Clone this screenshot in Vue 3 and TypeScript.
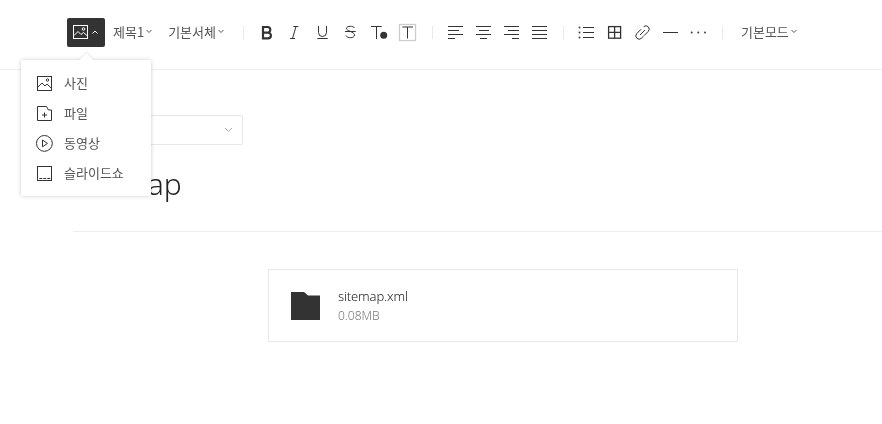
<template>
  <div class="editor">
    <header class="toolbar">
      <button class="media-btn">
        <svg width="16" height="16" viewBox="0 0 16 16" fill="none" stroke="#fff" stroke-width="1">
          <rect x="0.500" y="1.500" width="14" height="13" />
          <path d="M1 11.500l4-4 3 3 2.500-2 4 3.500" />
          <circle cx="10.500" cy="5" r="1.300" />
        </svg>
        <svg class="caret" width="7" height="5" viewBox="0 0 7 5" fill="none" stroke="#fff"><path d="M.5 3.500l2.500-2.500 2.500 2.500" /></svg>
      </button>
      <div class="select heading">제목1<svg class="chev" width="6" height="5" viewBox="0 0 6 5"><path d="M.5 1l2.500 2.500 2.500-2.500" /></svg></div>
      <div class="select font">기본서체<svg class="chev" width="6" height="5" viewBox="0 0 6 5"><path d="M.5 1l2.500 2.500 2.500-2.500" /></svg></div>
      <i class="sep first"></i>

      <div class="tools">
        <span class="tool"><svg width="28" height="28" viewBox="0 0 28 28" fill="none" stroke="#333" stroke-width="2.200"><path d="M10 8h4.500a2.800 2.800 0 0 1 0 5.600H10zM10 13.600h5a2.900 2.900 0 0 1 0 5.800H10zM10 7v13.500" /></svg></span>
        <span class="tool"><svg width="28" height="28" viewBox="0 0 28 28" fill="none" stroke="#333"><path d="M12.300 7.500h5M9 19.500h5M15 7.500l-3.500 12" /></svg></span>
        <span class="tool"><svg width="28" height="28" viewBox="0 0 28 28" fill="none" stroke="#333"><path d="M9.500 7v6.500a4 4 0 0 0 8 0V7M8.300 19.500h10.400" /></svg></span>
        <span class="tool"><svg width="28" height="28" viewBox="0 0 28 28" fill="none" stroke="#333"><path d="M17.500 9c-1-2.200-7.500-2.500-8 .3-.4 2.700 8 3.500 8 6.700 0 3.500-7.500 3.500-8.500.5M8 12.500h10.700" /></svg></span>
        <span class="tool"><svg width="28" height="28" viewBox="0 0 28 28" fill="none" stroke="#333"><path d="M6 7.500h10.700M11.500 7.500v12.500" /><circle cx="18.700" cy="16.300" r="3.500" fill="#333" stroke="none" /></svg></span>
        <span class="tool"><svg width="28" height="28" viewBox="0 0 28 28" fill="none" stroke="#333"><rect x="6.500" y="5.500" width="16" height="16" stroke="#ccc" stroke-width="1.300" /><path d="M9.300 8h10.700M14.500 8v11.500" /></svg></span>
      </div>
      <i class="sep second"></i>

      <div class="tools">
        <span class="tool"><svg width="28" height="28" viewBox="0 0 28 28" stroke="#333"><path d="M6 7.500h15M6 11.500h11M6 15.500h15M6 19.500h7" /></svg></span>
        <span class="tool"><svg width="28" height="28" viewBox="0 0 28 28" stroke="#333"><path d="M6 7.500h15M9 11.500h10M6 15.500h15M10 19.500h7" /></svg></span>
        <span class="tool"><svg width="28" height="28" viewBox="0 0 28 28" stroke="#333"><path d="M6 7.500h15M10 11.500h11M6 15.500h15M14 19.500h7" /></svg></span>
        <span class="tool"><svg width="28" height="28" viewBox="0 0 28 28" stroke="#333"><path d="M6 7.500h15M6 11.500h15M6 15.500h15M6 19.500h15" /></svg></span>
      </div>
      <i class="sep third"></i>

      <div class="tools">
        <span class="tool"><svg width="28" height="28" viewBox="0 0 28 28" stroke="#333" fill="none"><path d="M11 8.500h11M11 13.500h11M11 18.500h11" /><g fill="#444" stroke="none"><circle cx="7.500" cy="8.500" r="1" /><circle cx="7.500" cy="13.500" r="1" /><circle cx="7.500" cy="18.500" r="1" /></g></svg></span>
        <span class="tool"><svg width="28" height="28" viewBox="0 0 28 28" stroke="#333" fill="none" stroke-width="1.300"><rect x="8.600" y="7.600" width="12" height="11.600" /><path d="M14.600 7.600v11.600M8.600 13.400h12" /></svg></span>
        <span class="tool"><svg width="28" height="28" viewBox="0 0 28 28" stroke="#333" fill="none"><path d="M13 10.300L8.670 14.670a3.300 3.300 0 0 0 4.660 4.660L15.500 17.200" /><path d="M15.670 7.670a3.300 3.300 0 0 1 4.660 4.660L16 16.700" /><path d="M12 16l5-5" /></svg></span>
        <span class="tool"><svg width="28" height="28" viewBox="0 0 28 28" stroke="#333" fill="none"><path d="M7 13.500h15" /></svg></span>
        <span class="tool"><svg width="28" height="28" viewBox="0 0 28 28" fill="#444"><circle cx="7.700" cy="13.500" r="1" /><circle cx="14.300" cy="13.500" r="1" /><circle cx="21" cy="13.500" r="1" /></svg></span>
      </div>
      <i class="sep fourth"></i>
      <div class="select mode">기본모드<svg class="chev" width="6" height="5" viewBox="0 0 6 5"><path d="M.5 1l2.500 2.500 2.500-2.500" /></svg></div>
    </header>

    <main class="content">
      <div class="category">
        <svg width="9" height="6" viewBox="0 0 9 6" fill="none" stroke="#aaa"><path d="M1 1l3.500 3.500 3.500-3.500" /></svg>
      </div>
      <h1 class="title">sitemap</h1>
      <div class="file-wrap">
        <div class="file-card">
          <svg class="folder" width="29" height="28" viewBox="0 0 29 28"><path d="M0 0h13l4 3.500h12V28H0z" fill="#333" /></svg>
          <div>
            <div class="file-name">sitemap.xml</div>
            <div class="file-size">0.08MB</div>
          </div>
        </div>
      </div>
    </main>

    <div class="dropdown">
      <div class="row" v-for="item in menu" :key="item.label">
        <svg width="18" height="18" viewBox="0 0 18 18" fill="none" stroke="#333" v-html="item.icon"></svg>
        <span>{{ item.label }}</span>
      </div>
    </div>
  </div>
</template>

<script setup lang="ts">
interface MenuItem {
  label: string
  icon: string
}

const menu: MenuItem[] = [
  { label: '사진', icon: '<rect x="2.500" y="2.500" width="14" height="14"/><path d="M3 13l4-4 3 3 2-2 4 4"/><circle cx="12.500" cy="6" r="1.200"/>' },
  { label: '파일', icon: '<path d="M2.500 2.500h9l2 3.500h3v10.500h-14z"/><path d="M9.500 8.500v5M7 11h5"/>' },
  { label: '동영상', icon: '<circle cx="9.400" cy="9.400" r="7.900"/><path d="M7.500 6v6.800l5-3.400z"/>' },
  { label: '슬라이드쇼', icon: '<rect x="2.500" y="2.500" width="14" height="14"/><path d="M4.300 14.500h11" stroke-dasharray="3 1"/>' }
]
</script>

<style>
html,
body {
  margin: 0;
  background: #fff;
}
</style>

<style scoped>
.editor {
  position: relative;
  width: 882px;
  height: 424px;
  overflow: hidden;
  will-change: transform;
  font-family: "Noto Sans CJK KR", "Noto Sans", sans-serif;
  font-weight: 400;
  color: #333;
}

.toolbar {
  display: flex;
  align-items: center;
  height: 70px;
  padding: 0 0 5px 67px;
  box-sizing: border-box;
  border-bottom: 1px solid #eee;
}

.media-btn {
  display: flex;
  align-items: center;
  gap: 3px;
  width: 38px;
  height: 29px;
  padding: 0 0 0 6px;
  border: 0;
  border-radius: 2px;
  background: #333;
}

.select {
  display: flex;
  align-items: center;
  padding-bottom: 2px;
  font-size: 13px;
  color: #555;
  white-space: nowrap;
}

.chev {
  margin-left: 2px;
  fill: none;
  stroke: #555;
}

.heading { margin-left: 8px; }
.font { margin-left: 16px; }
.mode { margin-left: 18px; }

.sep {
  width: 1px;
  height: 13px;
  background: #e8e8e8;
}

.first { margin: 0 9px 0 19px; }
.second { margin: 0 9px 0 11px; }
.third { margin: 0 8px 0 9px; }
.fourth { margin-left: 10px; }

.tools {
  display: flex;
  margin-top: 2px;
}

.tool {
  display: block;
  width: 28px;
  height: 28px;
}

.content {
  padding: 45px 0 0 73px;
}

.category {
  display: flex;
  align-items: center;
  justify-content: flex-end;
  width: 170px;
  height: 30px;
  padding-right: 9px;
  box-sizing: border-box;
  border: 1px solid #e8e8e8;
  border-radius: 2px;
}

.title {
  margin: 15px 0 0;
  padding-bottom: 23px;
  border-bottom: 1px solid #eee;
  font-size: 30px;
  font-weight: 300;
  font-family: "Noto Sans", sans-serif;
  line-height: 48px;
  color: #222;
}

.file-wrap {
  padding: 37px 0 0 195px;
}

.file-card {
  display: flex;
  align-items: center;
  gap: 18px;
  width: 470px;
  height: 73px;
  padding-left: 22px;
  box-sizing: border-box;
  border: 1px solid #e8e8e8;
}

.file-name {
  font-family: "Noto Sans", sans-serif;
  font-size: 13px;
  font-weight: 300;
  letter-spacing: -0.15px;
  line-height: 20px;
  color: #222;
}

.file-size {
  font-family: "Noto Sans", sans-serif;
  font-size: 12px;
  font-weight: 300;
  line-height: 20px;
  color: #777;
}

.dropdown {
  position: absolute;
  left: 21px;
  top: 60px;
  width: 130px;
  height: 136px;
  padding-top: 8px;
  box-sizing: border-box;
  border-radius: 2px;
  background: #fff;
  box-shadow: 0 0 4px rgba(0, 0, 0, 0.2);
}

.dropdown::before {
  content: "";
  position: absolute;
  left: 59.5px;
  top: -5.5px;
  width: 11px;
  height: 11px;
  background: #fff;
  transform: rotate(45deg);
  box-shadow: -1px -1px 1px rgba(0, 0, 0, 0.08);
}

.row {
  position: relative;
  display: flex;
  align-items: center;
  gap: 11px;
  height: 30px;
  padding-left: 14px;
  font-size: 13px;
  color: #555;
}

.row span {
  margin-bottom: 2px;
}
</style>
